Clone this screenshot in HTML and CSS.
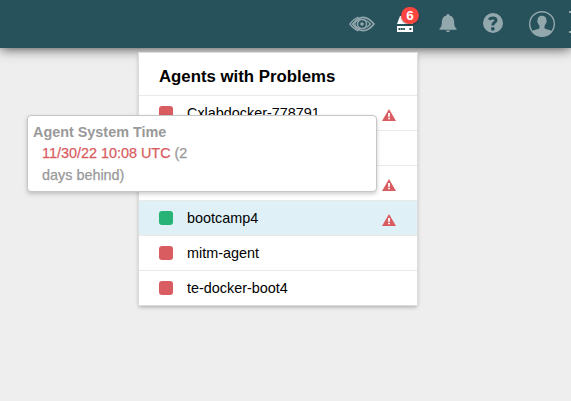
FILE: index.html
```html
<!DOCTYPE html>
<html lang="en">
<head>
<meta charset="utf-8">
<title>Agents</title>
<link rel="stylesheet" href="styles.css">
</head>
<body>
<header class="topbar">
  <svg class="icon eye" viewBox="0 0 26 16" fill="none" stroke="currentColor">
    <path d="M9.5 1.2Q4.5 3 .9 8Q4.5 13 9.5 14.8" stroke-width="1.3"/>
    <path d="M3.6 8Q14-5.4 25 8Q14 21.4 3.6 8Z" stroke-width="1.7"/>
    <path d="M11 3.2Q6.8 4.6 5.8 8Q6.8 11.4 11 12.8" stroke-width="1.1"/>
    <path d="M14.5 3.3Q18.5 4.6 21.5 8Q18.5 11.4 14.5 12.7" stroke-width="1.2"/>
    <circle cx="13" cy="8" r="4.5" stroke-width="1.5"/>
    <circle cx="13" cy="8" r="1.8" fill="currentColor" stroke="none"/>
  </svg>
  <div class="agents">
    <svg class="icon server" viewBox="0 0 16 16">
      <path d="M3 0H13L16 8H0ZM0 10H16V16H0Z" fill="#fff"/>
      <path d="M1.5 12h2v2h-2zM4 12h1.7v2H4zM6.2 12h1.7v2H6.2zM12.4 12h2v2h-2z" fill="#27515b"/>
    </svg>
    <span class="badge">6</span>
  </div>
  <svg class="icon bell" viewBox="0 0 18 18">
    <path d="M9 0C10 0 10.5.7 10.5 1.6C13.8 2.3 15 4.8 15.1 7.5C15.2 11.8 16 13.3 17.6 14.8V15.7H.4V14.8C2 13.3 2.8 11.8 2.9 7.5C3 4.8 4.2 2.3 7.5 1.6C7.5.7 8 0 9 0ZM6.8 16.5H11.2Q10.9 18 9 18T6.8 16.5Z" fill="currentColor"/>
  </svg>
  <svg class="icon help" viewBox="0 0 20 20">
    <circle cx="10" cy="10" r="10" fill="currentColor"/>
    <path d="M6.2 6.8Q7.2 4.9 9.9 4.9Q13 4.9 13 7.2Q13 8.6 11.4 9.5Q9.8 10.4 9.8 12.6" fill="none" stroke="#27515b" stroke-width="3"/>
    <circle cx="9.8" cy="15.8" r="1.9" fill="#27515b"/>
  </svg>
  <svg class="icon user" viewBox="0 0 26 26">
    <circle cx="13" cy="13" r="12.3" fill="none" stroke="currentColor" stroke-width="1.4"/>
    <path d="M13 4.8C16 4.8 17.6 6.7 17.4 9.6C18 10 17.6 12 16.9 12.2C16.6 13.4 16 14.1 15.5 14.7V17.3C16.5 18.5 21.6 18.8 23 20.4A12.4 12.4 0 0 1 3 20.4C4.4 18.8 9.5 18.5 10.5 17.3V14.7C10 14.1 9.4 13.4 9.1 12.2C8.4 12 8 10 8.6 9.6C8.4 6.7 10 4.8 13 4.8Z" fill="currentColor"/>
  </svg>
  <span class="edge"></span>
</header>

<section class="panel">
  <h2 class="title">Agents with Problems</h2>
  <ul class="list">
    <li class="row"><i class="dot"></i><span class="name">Cxlabdocker-778791</span>
      <svg class="warn" viewBox="0 0 14 12"><path d="M7 0L14 12H0Z" fill="#d95c61"/><path d="M6.1 4h1.8v3.8H6.1zM6.1 8.7h1.8v1.6H6.1z" fill="#fff"/></svg></li>
    <li class="row"></li>
    <li class="row"><span class="name"></span>
      <svg class="warn" viewBox="0 0 14 12"><path d="M7 0L14 12H0Z" fill="#d95c61"/><path d="M6.1 4h1.8v3.8H6.1zM6.1 8.7h1.8v1.6H6.1z" fill="#fff"/></svg></li>
    <li class="row active"><i class="dot ok"></i><span class="name">bootcamp4</span>
      <svg class="warn" viewBox="0 0 14 12"><path d="M7 0L14 12H0Z" fill="#d95c61"/><path d="M6.1 4h1.8v3.8H6.1zM6.1 8.7h1.8v1.6H6.1z" fill="#fff"/></svg></li>
    <li class="row"><i class="dot"></i><span class="name">mitm-agent</span></li>
    <li class="row"><i class="dot"></i><span class="name">te-docker-boot4</span></li>
  </ul>
</section>

<aside class="tooltip">
  <strong class="tip-title">Agent System Time</strong>
  <p class="tip-text"><span class="time">11/30/22 10:08 UTC</span> (2 days behind)</p>
</aside>
</body>
</html>
```

FILE: styles.css
```css
* { box-sizing: border-box; }

body {
  margin: 0;
  height: 401px;
  overflow: hidden;
  background: #eee;
  font-family: "Liberation Sans", Arial, sans-serif;
  color: #000;
}

.topbar {
  display: flex;
  align-items: flex-start;
  height: 48px;
  padding-left: 349px;
  background: #27515b;
  box-shadow: 0 0 12px rgba(0, 0, 0, .8);
  color: #93a8ad;
}

.icon { display: block; flex: none; }
.eye { width: 26px; height: 16px; margin-top: 16px; }
.agents { position: relative; flex: none; margin: 16px 0 0 22px; }
.server { width: 16px; height: 16px; }
.badge {
  position: absolute;
  left: 4px;
  top: -9px;
  width: 18px;
  height: 17px;
  border-radius: 9px;
  background: #fb4540;
  box-shadow: 0 1px 2px rgba(0, 0, 0, .35);
  color: #fff;
  font-size: 13.5px;
  font-weight: bold;
  line-height: 18px;
  text-align: center;
}
.bell { width: 18px; height: 18px; margin: 14px 0 0 26px; }
.help { width: 20px; height: 20px; margin: 13px 0 0 26px; }
.user { width: 26px; height: 26px; margin: 11px 0 0 26px; }
.edge {
  flex: none;
  width: 10px;
  height: 22px;
  margin: 11px 0 0 14px;
  border-top: 2px solid;
  border-bottom: 2px solid;
}

.panel {
  position: relative;
  width: 278px;
  margin: 5px 0 0 139px;
  background: #fff;
  box-shadow: 0 0 0 1px #ddd, 0 2px 4px rgba(0, 0, 0, .3);
}
.title {
  height: 42px;
  margin: 0;
  padding-left: 20px;
  font-size: 16.8px;
  line-height: 48px;
  white-space: nowrap;
}
.list { margin: 0; padding: 0; list-style: none; }
.row {
  display: flex;
  align-items: center;
  height: 35px;
  padding: 0 21px 0 20px;
  border-top: 1px solid #e9e9e9;
}
.active { background: #dff0f7; }
.dot {
  width: 14px;
  height: 14px;
  margin-right: 14px;
  border-radius: 3px;
  background: #d95c61;
}
.ok { background: #27b376; }
.name {
  flex: 1;
  height: 16px;
  overflow: hidden;
  font-size: 14.4px;
  line-height: 16px;
  white-space: nowrap;
}
.warn { width: 14px; height: 12px; margin-top: 4px; }

.tooltip {
  position: absolute;
  left: 27px;
  top: 115px;
  width: 350px;
  height: 77px;
  padding: 5px;
  border: 1px solid #c6c6c6;
  border-radius: 4px;
  background: #fff;
  box-shadow: 0 2px 4px rgba(0, 0, 0, .2);
  color: #999;
  font-size: 14.4px;
  line-height: 22px;
}
.tip-title { display: block; height: 21px; }
.tip-text { width: 160px; margin: 0 0 0 9px; -webkit-text-stroke: .25px; }
.time { color: #d95c61; }
```
